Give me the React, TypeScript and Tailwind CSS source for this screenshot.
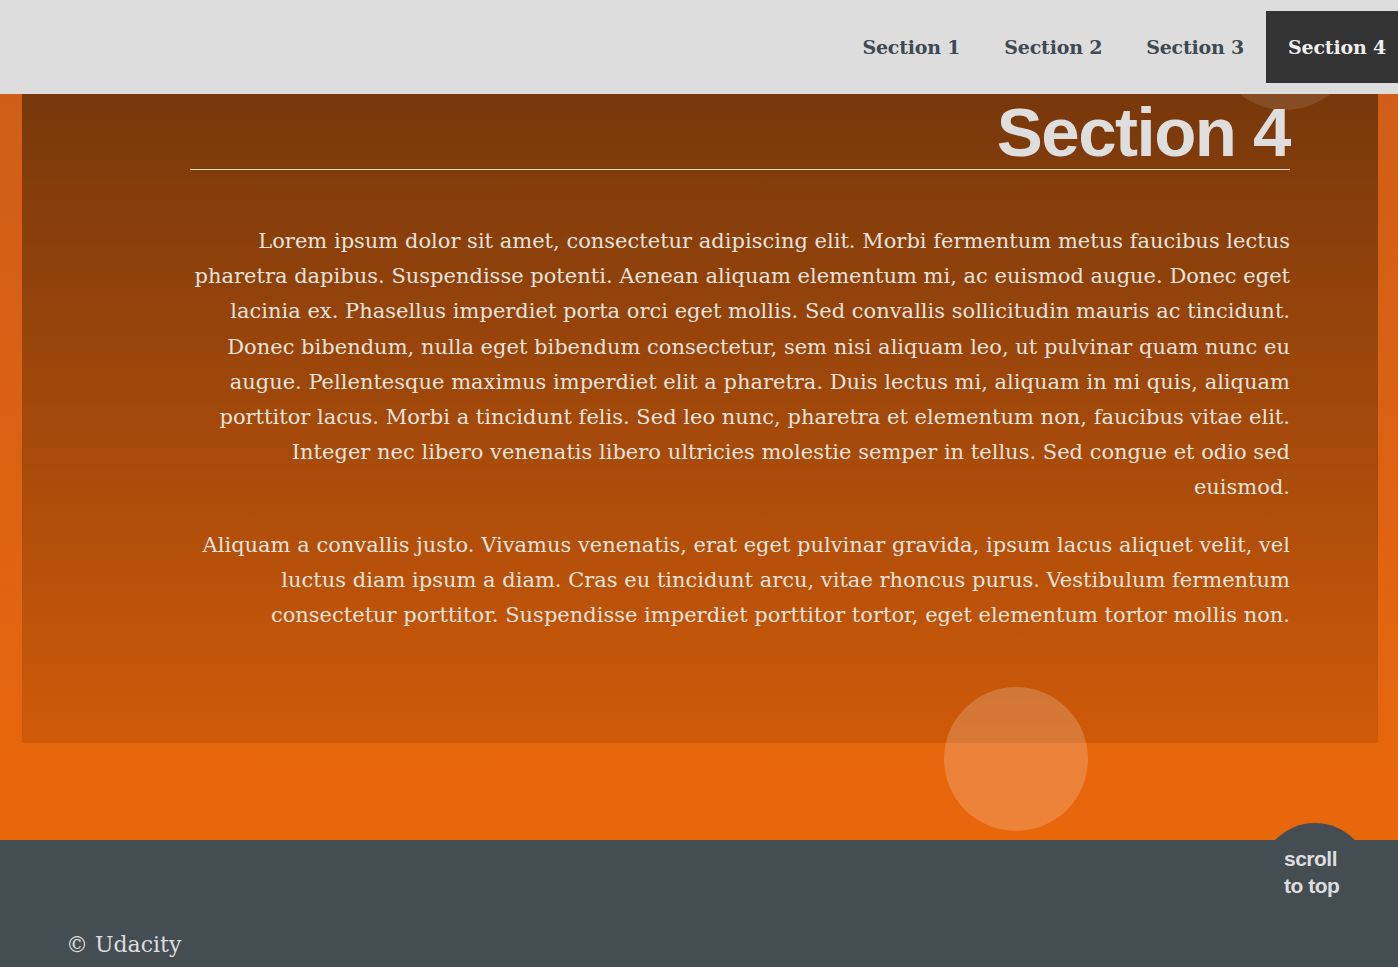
import React from 'react';

const para1 = [
  'Lorem ipsum dolor sit amet, consectetur adipiscing elit. Morbi fermentum metus faucibus lectus',
  'pharetra dapibus. Suspendisse potenti. Aenean aliquam elementum mi, ac euismod augue. Donec eget',
  'lacinia ex. Phasellus imperdiet porta orci eget mollis. Sed convallis sollicitudin mauris ac tincidunt.',
  'Donec bibendum, nulla eget bibendum consectetur, sem nisi aliquam leo, ut pulvinar quam nunc eu',
  'augue. Pellentesque maximus imperdiet elit a pharetra. Duis lectus mi, aliquam in mi quis, aliquam',
  'porttitor lacus. Morbi a tincidunt felis. Sed leo nunc, pharetra et elementum non, faucibus vitae elit.',
  'Integer nec libero venenatis libero ultricies molestie semper in tellus. Sed congue et odio sed',
  'euismod.',
];

const para2 = [
  'Aliquam a convallis justo. Vivamus venenatis, erat eget pulvinar gravida, ipsum lacus aliquet velit, vel',
  'luctus diam ipsum a diam. Cras eu tincidunt arcu, vitae rhoncus purus. Vestibulum fermentum',
  'consectetur porttitor. Suspendisse imperdiet porttitor tortor, eget elementum tortor mollis non.',
];

const navItems = ['Section 1', 'Section 2', 'Section 3', 'Section 4'];

function Paragraph({ lines }: { lines: string[] }) {
  return (
    <p className="text-right">
      {lines.map((line, i) => (
        <span key={i} className="block whitespace-nowrap">
          {line}
        </span>
      ))}
    </p>
  );
}

export default function App() {
  const active = 'Section 4';

  return (
    <div className="relative h-[967px] w-full overflow-hidden bg-gradient-to-b from-[#cc5c18] to-[#ee6908] font-['DejaVu_Serif',serif]">
      {/* header */}
      <header className="relative z-20 h-[94px] bg-[#dddddd]">
        <ul className="flex justify-end pt-[11px] mr-[-10px]">
          {navItems.map((item) => (
            <li
              key={item}
              className={`h-[72px] px-[22px] flex items-center text-[19px] font-bold tracking-[-0.2px] ${
                item === active ? 'bg-[#333333] text-[#eeeeee]' : 'text-[#3e4a52]'
              }`}
            >
              {item}
            </li>
          ))}
        </ul>
      </header>

      {/* circle peeking below header */}
      <div className="absolute z-10 left-[1213px] top-[-34px] h-[144px] w-[144px] rounded-full bg-white/[0.1]" />

      <main className="relative">
        <section className="ml-[22px] mr-[20px] bg-gradient-to-b from-[#78380b] to-[#cf5a08] pl-[168px] pb-[110px]">
          <div className="w-[1100px] pt-[4px]">
            <h2 className="border-b border-[#f3e1c4] pb-[2px] text-right font-['Liberation_Sans',Arial,sans-serif] text-[69px] font-bold leading-[69px] tracking-[-1.5px] text-[#dedede]">
              Section 4
            </h2>
            <div className="mt-[54px] space-y-[22px] text-[21px] leading-[35.2px] text-[#e6e2dc]">
              <Paragraph lines={para1} />
              <Paragraph lines={para2} />
            </div>
          </div>
        </section>

        <div className="h-[97px]" />

        {/* bottom circle */}
        <div className="absolute left-[944px] top-[593px] h-[144px] w-[144px] rounded-full bg-white/[0.19]" />

        {/* footer */}
        <footer className="relative bg-[#434d52] h-[130px] pl-[66px] pt-[90px]">
          <p className="text-[22px] leading-[30px] text-[#dddddd]">© Udacity</p>
          <div className="absolute right-[28px] top-[-17px] flex h-[110px] w-[110px] items-start justify-start rounded-full bg-[#434d52] pl-[24px] pt-[22px]">
            <span className="font-['Liberation_Sans',Arial,sans-serif] text-[21px] font-bold leading-[27px] tracking-[-0.5px] text-[#dddddd]">
              scroll
              <br />
              to top
            </span>
          </div>
        </footer>
      </main>
    </div>
  );
}
